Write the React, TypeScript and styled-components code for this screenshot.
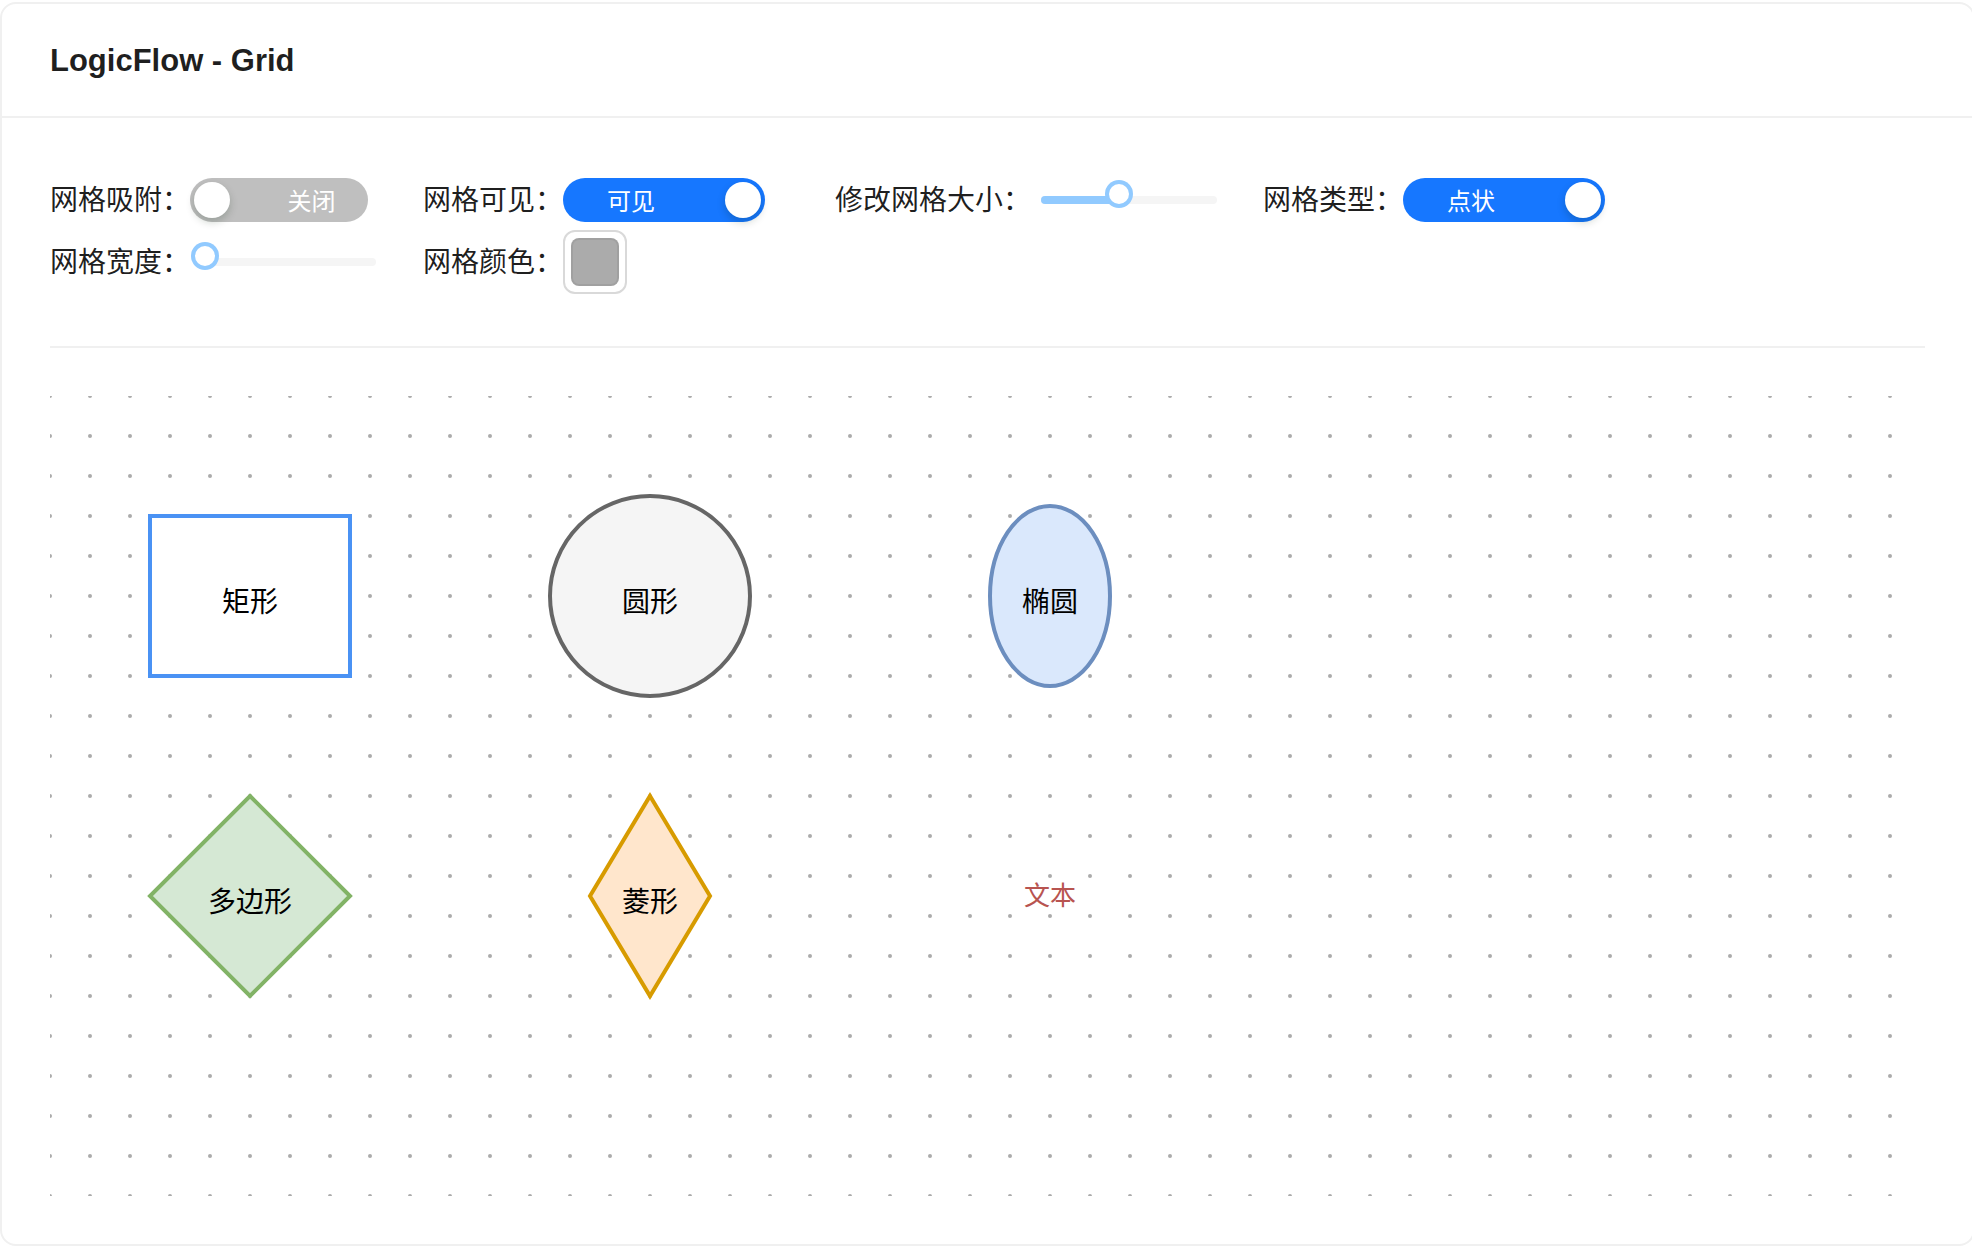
import React from 'react';
import styled, { createGlobalStyle } from 'styled-components';

const GlobalStyle = createGlobalStyle`
  html, body {
    margin: 0;
    padding: 0;
    background: #ffffff;
    overflow: hidden;
  }
  body {
    font-family: "Liberation Sans", "Noto Sans CJK SC", sans-serif;
    color: rgba(0, 0, 0, 0.88);
  }
  *, *::before, *::after {
    box-sizing: border-box;
  }
`;

const Card = styled.div`
  width: 1975px;
  margin-top: 2px;
  border: 2px solid #f0f0f0;
  border-radius: 16px;
  background: #ffffff;
`;

const Header = styled.div`
  height: 114px;
  display: flex;
  align-items: center;
  padding: 2px 48px 0;
  border-bottom: 2px solid #f0f0f0;
`;

const Title = styled.h1`
  margin: 0;
  font-family: "Liberation Sans", "Noto Sans CJK SC", sans-serif;
  font-size: 31px;
  font-weight: 700;
  line-height: 48px;
  color: rgba(0, 0, 0, 0.88);
`;

const Body = styled.div`
  padding: 60px 48px 48px;
`;

const Controls = styled.div`
  display: grid;
  grid-template-columns: 373px 412px 428px auto;
  row-gap: 8px;
  align-items: center;
`;

const Item = styled.div`
  display: flex;
  align-items: center;
`;

const Label = styled.span`
  font-family: "Noto Sans CJK SC", sans-serif;
  font-size: 28px;
  line-height: 36px;
  padding-bottom: 5px;
  color: rgba(0, 0, 0, 0.88);
  white-space: nowrap;
`;

const SwitchRoot = styled.div<{ $on: boolean; $w: number }>`
  position: relative;
  width: ${(p) => p.$w}px;
  height: 44px;
  border-radius: 22px;
  background: ${(p) => (p.$on ? '#1677ff' : '#bfbfbf')};
  display: flex;
  align-items: center;
  padding: ${(p) => (p.$on ? '0 84px 0 18px' : '0 7px 0 72px')};
`;

const SwitchText = styled.span`
  flex: 1;
  text-align: center;
  color: #ffffff;
  font-family: "Noto Sans CJK SC", sans-serif;
  font-size: 24px;
  line-height: 44px;
`;

const SwitchHandle = styled.span<{ $on: boolean }>`
  position: absolute;
  top: 4px;
  ${(p) => (p.$on ? 'right: 4px;' : 'left: 4px;')}
  width: 36px;
  height: 36px;
  border-radius: 50%;
  background: #ffffff;
  box-shadow: 0 4px 8px rgba(0, 35, 11, 0.2);
`;

const SliderRoot = styled.div`
  width: 176px;
  height: 44px;
  margin-left: 10px;
  display: flex;
  align-items: center;
`;

const Rail = styled.div`
  position: relative;
  width: 100%;
  height: 8px;
  border-radius: 4px;
  background: #f5f5f5;
`;

const Track = styled.div`
  position: absolute;
  left: 0;
  top: 0;
  height: 100%;
  border-radius: 4px;
  background: #91caff;
`;

const Handle = styled.div`
  position: absolute;
  top: -12px;
  width: 20px;
  height: 20px;
  margin-left: -10px;
  border-radius: 50%;
  background: #ffffff;
  box-shadow: 0 0 0 4px #91caff;
`;

const ColorTrigger = styled.div`
  width: 64px;
  height: 64px;
  padding: 6px;
  border: 2px solid #d9d9d9;
  border-radius: 12px;
  background: #ffffff;
`;

const ColorSwatch = styled.div<{ $color: string }>`
  width: 100%;
  height: 100%;
  border-radius: 8px;
  background: ${(p) => p.$color};
  box-shadow: inset 0 0 0 2px rgba(0, 0, 0, 0.06);
`;

const Divider = styled.div`
  margin-top: 52px;
  height: 2px;
  background: #f0f0f0;
`;

const Canvas = styled.div`
  margin-top: 48px;
  height: 800px;
  position: relative;
  overflow: hidden;
`;

const CanvasSvg = styled.svg`
  display: block;
  width: 100%;
  height: 100%;
`;

const Switch: React.FC<{ on: boolean; text: string; width: number }> = ({ on, text, width }) => (
  <SwitchRoot $on={on} $w={width}>
    <SwitchText>{text}</SwitchText>
    <SwitchHandle $on={on} />
  </SwitchRoot>
);

const Slider: React.FC<{ value: number }> = ({ value }) => (
  <SliderRoot>
    <Rail>
      <Track style={{ width: `${value * 100}%` }} />
      <Handle style={{ left: `${value * 100}%` }} />
    </Rail>
  </SliderRoot>
);

type Shape =
  | { kind: 'rect'; x: number; y: number; w: number; h: number; fill: string; stroke: string; text: string }
  | { kind: 'ellipse'; x: number; y: number; rx: number; ry: number; fill: string; stroke: string; text: string }
  | { kind: 'poly'; x: number; y: number; rx: number; ry: number; fill: string; stroke: string; text: string }
  | { kind: 'text'; x: number; y: number; color: string; text: string };

const shapes: Shape[] = [
  { kind: 'rect', x: 200, y: 200, w: 200, h: 160, fill: '#ffffff', stroke: '#4a92f4', text: '矩形' },
  { kind: 'ellipse', x: 600, y: 200, rx: 100, ry: 100, fill: '#f5f5f5', stroke: '#666666', text: '圆形' },
  { kind: 'ellipse', x: 1000, y: 200, rx: 60, ry: 90, fill: '#dae8fc', stroke: '#6c8ebf', text: '椭圆' },
  { kind: 'poly', x: 200, y: 500, rx: 100, ry: 100, fill: '#d5e8d4', stroke: '#82b366', text: '多边形' },
  { kind: 'poly', x: 600, y: 500, rx: 60, ry: 100, fill: '#ffe6cc', stroke: '#d79b00', text: '菱形' },
  { kind: 'text', x: 1000, y: 500, color: '#b85450', text: '文本' },
];

const NodeLabel: React.FC<{ x: number; y: number; text: string; color?: string; size?: number }> = ({
  x,
  y,
  text,
  color = '#000000',
  size = 28,
}) => (
  <text
    x={x}
    y={y + 4}
    textAnchor="middle"
    dominantBaseline="central"
    fontFamily='"Noto Sans CJK SC", sans-serif'
    fontSize={size}
    fill={color}
  >
    {text}
  </text>
);

const FlowCanvas: React.FC = () => (
  <CanvasSvg xmlns="http://www.w3.org/2000/svg">
    <defs>
      <pattern id="dot-grid" width="40" height="40" patternUnits="userSpaceOnUse">
        <circle cx="0" cy="0" r="2" fill="#ababab" />
        <circle cx="40" cy="0" r="2" fill="#ababab" />
        <circle cx="0" cy="40" r="2" fill="#ababab" />
        <circle cx="40" cy="40" r="2" fill="#ababab" />
      </pattern>
    </defs>
    <rect x="0" y="0" width="100%" height="100%" fill="url(#dot-grid)" />
    {shapes.map((s, i) => {
      if (s.kind === 'rect') {
        return (
          <g key={i}>
            <rect x={s.x - s.w / 2} y={s.y - s.h / 2} width={s.w} height={s.h} fill={s.fill} stroke={s.stroke} strokeWidth={4} />
            <NodeLabel x={s.x} y={s.y} text={s.text} />
          </g>
        );
      }
      if (s.kind === 'ellipse') {
        return (
          <g key={i}>
            <ellipse cx={s.x} cy={s.y} rx={s.rx} ry={s.ry} fill={s.fill} stroke={s.stroke} strokeWidth={4} />
            <NodeLabel x={s.x} y={s.y} text={s.text} />
          </g>
        );
      }
      if (s.kind === 'poly') {
        const pts = `${s.x},${s.y - s.ry} ${s.x + s.rx},${s.y} ${s.x},${s.y + s.ry} ${s.x - s.rx},${s.y}`;
        return (
          <g key={i}>
            <polygon points={pts} fill={s.fill} stroke={s.stroke} strokeWidth={4} />
            <NodeLabel x={s.x} y={s.y} text={s.text} />
          </g>
        );
      }
      return <NodeLabel key={i} x={s.x} y={s.y - 7} text={s.text} color={s.color} size={26} />;
    })}
  </CanvasSvg>
);

export default function App() {
  return (
    <>
      <GlobalStyle />
      <Card>
        <Header>
          <Title>LogicFlow - Grid</Title>
        </Header>
        <Body>
          <Controls>
            <Item>
              <Label>网格吸附：</Label>
              <Switch on={false} text="关闭" width={178} />
            </Item>
            <Item>
              <Label>网格可见：</Label>
              <Switch on text="可见" width={202} />
            </Item>
            <Item>
              <Label>修改网格大小：</Label>
              <Slider value={0.443} />
            </Item>
            <Item>
              <Label>网格类型：</Label>
              <Switch on text="点状" width={202} />
            </Item>
            <Item>
              <Label>网格宽度：</Label>
              <Slider value={0.03} />
            </Item>
            <Item>
              <Label>网格颜色：</Label>
              <ColorTrigger>
                <ColorSwatch $color="#ababab" />
              </ColorTrigger>
            </Item>
          </Controls>
          <Divider />
          <Canvas>
            <FlowCanvas />
          </Canvas>
        </Body>
      </Card>
    </>
  );
}
